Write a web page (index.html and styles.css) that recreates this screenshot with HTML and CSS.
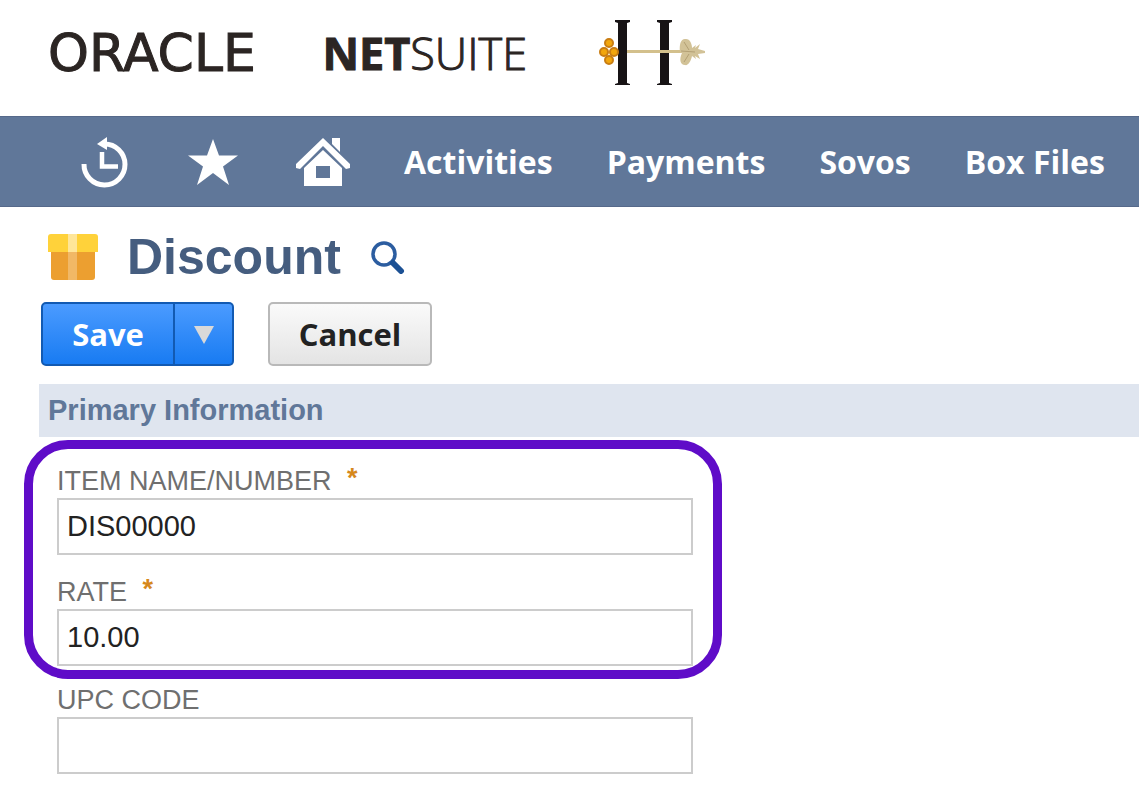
FILE: index.html
```html
<!DOCTYPE html>
<html lang="en">
<head>
    <meta charset="UTF-8">
    <meta name="viewport" content="width=device-width, initial-scale=1.0">
    <title>Discount - NetSuite</title>
    <link rel="stylesheet" href="styles.css">
</head>
<body>

    <header class="header">
        <a href="#" class="logo">
            <span class="logo-oracle">ORACLE</span>
            <span class="logo-netsuite"><b>NET</b>SUITE</span>
        </a>
        <!-- company logo -->
        <svg class="company-logo" width="108" height="68" viewBox="0 0 108 68" role="img" aria-label="H">
            <path d="M16 1h15v2l-3 1v60l3 1v1H16v-1l3-1V4l-3-1z M58 1h15v2l-3 1v60l3 1v1H58v-1l3-1V4l-3-1z" fill="#171315"/>
            <path d="M28 32.500H84" stroke="#d3c08c" stroke-width="3"/>
            <g fill="#f2a60c" stroke="#c97d12" stroke-width="2">
                <circle cx="10" cy="24" r="4"/>
                <circle cx="5" cy="33" r="4"/>
                <circle cx="15" cy="33" r="4"/>
                <circle cx="10" cy="41" r="4"/>
            </g>
            <path d="M81 33C80 25 82 19 87 20C91 20 93 25 93 29L97 26L96 29L101 25L99 30L106 32L106 34L99 35L101 40L96 37L97 40L93 37C92 42 89 47 86 46C81 46 80 40 83 34z" fill="#d2c297"/>
            <path d="M82 32l14 1M85 23l5 8M85 43l5-8" stroke="#b3a074" stroke-width="1" fill="none"/>
        </svg>
    </header>

    <nav class="navbar">
        <a href="#" class="nav-icon" aria-label="Recent records">
            <svg width="50" height="52" viewBox="0 0 50 52">
                <path d="M4 28A20.500 20.500 0 1 0 24 8" fill="none" stroke="#fff" stroke-width="5"/>
                <path d="M17 8L27 1V14z" fill="#fff"/>
                <path d="M22 16V30.500H38" fill="none" stroke="#fff" stroke-width="4.500"/>
            </svg>
        </a>
        <a href="#" class="nav-icon" aria-label="Shortcuts">
            <svg width="50" height="52" viewBox="0 0 50 52">
                <path d="M25 3L31 19.500L50 19.500L35 30.500L41 49L25 37L9 49L15 30.500L0 19.500L19 19.500z" fill="#fff"/>
            </svg>
        </a>
        <a href="#" class="nav-icon home" aria-label="Home">
            <svg width="54" height="52" viewBox="0 0 54 52">
                <path d="M36 2h8v14l-8-8z" fill="#fff"/>
                <path d="M27 2L54 28V32L50 33L27 10L4 33L0 32V28z" fill="#fff"/>
                <path d="M27 14L46 32V50H8V32z M20 30V42H34V30z" fill="#fff" fill-rule="evenodd"/>
            </svg>
        </a>
        <a href="#">Activities</a>
        <a href="#">Payments</a>
        <a href="#">Sovos</a>
        <a href="#">Box Files</a>
    </nav>

    <main class="content">
        <div class="page-title">
            <svg width="50" height="48" viewBox="0 0 50 48">
                <path d="M3 18H47V44Q47 47 44 47H6Q3 47 3 44z" fill="#ec9f30"/>
                <path d="M20 18h9v29h-9z" fill="#f1b866"/>
                <path d="M3 1H47Q50 1 50 4V19H0V4Q0 1 3 1z" fill="#ffd23a"/>
                <path d="M20 1h9v18h-9z" fill="#ffe699"/>
            </svg>
            <h1>Discount</h1>
            <button type="button" class="search" aria-label="Search">
                <svg width="34" height="34" viewBox="0 0 34 34">
                    <circle cx="13" cy="14" r="11" fill="none" stroke="#2c5da0" stroke-width="3.500"/>
                    <path d="M22 23L30 31" stroke="#1c5194" stroke-width="6" stroke-linecap="round"/>
                </svg>
            </button>
        </div>

        <form>
            <div class="buttons">
                <div class="save-group">
                    <button type="submit" class="save">Save</button>
                    <button type="button" class="save-menu" aria-label="More save options">
                        <svg width="20" height="20" viewBox="0 0 20 20">
                            <path d="M0 2H20L10 20z" fill="#d9d9d9"/>
                        </svg>
                    </button>
                </div>
                <button type="button" class="cancel">Cancel</button>
            </div>

            <h2>Primary Information</h2>

            <div class="fields">
                <div class="highlight">
                    <div class="field">
                        <label for="itemName">ITEM NAME/NUMBER <span class="required">*</span></label>
                        <input type="text" id="itemName" value="DIS00000">
                    </div>
                    <div class="field">
                        <label for="rate">RATE <span class="required">*</span></label>
                        <input type="text" id="rate" value="10.00">
                    </div>
                </div>
                <div class="field upc">
                    <label for="upcCode">UPC CODE</label>
                    <input type="text" id="upcCode">
                </div>
            </div>
        </form>
    </main>

</body>
</html>
```
FILE: styles.css
```css
* {
    box-sizing: border-box;
}

body {
    margin: 0;
    background: #fff;
    font-family: "Open Sans", sans-serif;
}

a {
    color: inherit;
    text-decoration: none;
}

svg {
    display: block;
}

button {
    font-family: inherit;
    cursor: pointer;
}

/* header */

.header {
    display: flex;
    align-items: center;
    height: 116px;
    padding: 0 48px 10px;
}

.logo {
    display: flex;
    align-items: center;
    width: 479px;
    margin-right: 72px;
    justify-content: space-between;
    line-height: 64px;
    color: #2b2523;
}

.logo-oracle {
    font-family: "DejaVu Sans", sans-serif;
    font-size: 52px;
    -webkit-text-stroke: 1px #2b2523;
}

.logo-netsuite {
    font-size: 45px;
    font-weight: 300;
    -webkit-text-stroke: 1px #2b2523;
}

.logo-netsuite b {
    font-weight: 700;
}

/* navigation */

.navbar {
    display: flex;
    align-items: center;
    gap: 54px;
    height: 91px;
    padding-left: 80px;
    background: #607799;
    border-top: 1px solid #56698a;
    border-bottom: 1px solid #56698a;
    color: #fff;
    font-size: 32px;
    font-weight: 700;
    line-height: 44px;
    white-space: nowrap;
}

.nav-icon {
    margin-right: 4px;
}

.nav-icon.home {
    margin-right: 0;
}

/* page */

.content {
    padding: 18px 0 16px;
}

.page-title {
    display: flex;
    align-items: center;
    height: 64px;
    padding-left: 48px;
}

.page-title h1 {
    margin: 0 30px 0 29px;
    color: #455d7f;
    font-family: "Liberation Sans", Arial, sans-serif;
    font-size: 50px;
    font-weight: 700;
    line-height: 64px;
}

.search {
    padding: 0;
    border: none;
    background: none;
}

.buttons {
    display: flex;
    gap: 34px;
    margin: 13px 0 18px;
    padding-left: 41px;
}

.buttons button {
    height: 64px;
    font-size: 31px;
    font-weight: 700;
}

.save-group {
    display: flex;
}

.save,
.save-menu {
    border: 2px solid #125ab2;
    background: linear-gradient(#4b9bff, #187bf2);
    color: #fff;
}

.save {
    width: 134px;
    padding: 0;
    border-radius: 5px 0 0 5px;
}

.save-menu {
    display: flex;
    align-items: center;
    justify-content: center;
    width: 59px;
    padding: 0;
    border-left: none;
    border-radius: 0 5px 5px 0;
}

.cancel {
    width: 164px;
    padding: 0;
    border: 2px solid #b9b9b9;
    border-radius: 5px;
    background: linear-gradient(#fafafa, #e4e4e4);
    color: #222;
}

h2 {
    height: 53px;
    margin: 0 0 3px 39px;
    padding-left: 9px;
    background: #dfe5ef;
    color: #607799;
    font-family: "Liberation Sans", Arial, sans-serif;
    font-size: 29px;
    font-weight: 700;
    line-height: 52px;
}

.fields {
    max-width: 722px;
    padding-left: 24px;
    font-family: "Liberation Sans", Arial, sans-serif;
}

.highlight {
    padding: 17px 20px 4px 24px;
    border: 9px solid #5f0cc8;
    border-radius: 44px;
}

.field + .field {
    margin-top: 22px;
}

.upc {
    margin-top: 6px;
    padding: 0 29px 0 33px;
}

label {
    display: block;
    margin-bottom: 2px;
    color: #6f6f6f;
    font-size: 27px;
    line-height: 30px;
}

.required {
    margin-left: 8px;
    color: #d6881c;
    font-weight: 700;
    vertical-align: top;
    line-height: 24px;
}

input {
    display: block;
    width: 100%;
    height: 57px;
    padding: 0 8px;
    border: 2px solid #ccc;
    background: #fff;
    color: #222;
    font-family: inherit;
    font-size: 29px;
}
```
